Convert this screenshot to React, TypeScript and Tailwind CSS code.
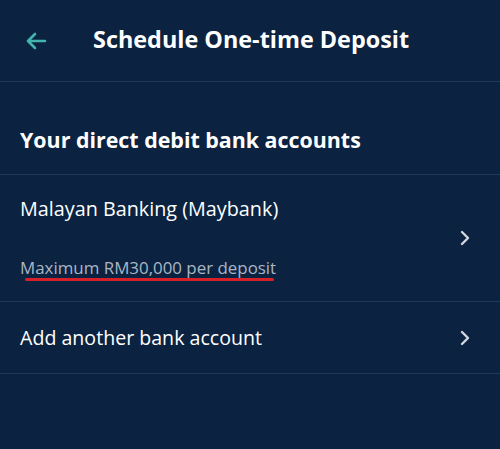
import React from 'react';

function Chevron() {
  return (
    <svg width="12" height="16" viewBox="0 0 12 16" fill="none" className="shrink-0">
      <path d="M3 2 L9 8 L3 14" stroke="#d3d8de" strokeWidth="2.4" strokeLinecap="round" strokeLinejoin="round" />
    </svg>
  );
}

export default function App() {
  return (
    <div className="w-[500px] h-[449px] bg-[#0b2341] text-white font-['Open_Sans',sans-serif]">
      <header className="h-[82px] flex items-center border-b border-[#1d3a5c]">
        <button className="w-[93px] pl-[25px] flex items-center">
          <svg width="22" height="18" viewBox="0 0 22 18" fill="none">
            <path d="M20 9 H3 M10 2 L3 9 L10 16" stroke="#43b3ad" strokeWidth="2.6" strokeLinecap="round" strokeLinejoin="round" />
          </svg>
        </button>
        <h1 className="text-[23.4px] font-bold mt-[-2px]">Schedule One-time Deposit</h1>
      </header>

      <div className="h-[93px] flex items-center px-5 pt-[24px] border-b border-[#1d3a5c]">
        <h2 className="text-[21.4px] font-bold">Your direct debit bank accounts</h2>
      </div>

      <div className="h-[127px] flex items-center justify-between pl-5 pr-[29px] border-b border-[#1d3a5c]">
        <div className="flex flex-col">
          <span className="text-[19.8px] leading-[26px]">Malayan Banking (Maybank)</span>
          <span className="mt-[35px] text-[16.9px] leading-[22px] text-[#aab6c4]">Maximum RM30,000 per deposit</span>
          <div className="ml-[5px] mt-[-1px] w-[249px] h-[3px] rounded-full bg-[#d8202a]" />
        </div>
        <Chevron />
      </div>

      <div className="h-[72px] flex items-center justify-between pl-5 pr-[29px] border-b border-[#1d3a5c]">
        <span className="text-[19.6px]">Add another bank account</span>
        <Chevron />
      </div>
    </div>
  );
}
